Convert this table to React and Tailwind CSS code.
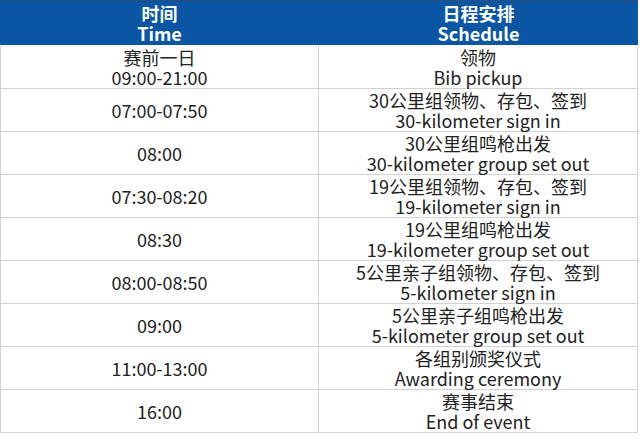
import React from "react";

const rows = [
  [["赛前一日", "09:00-21:00"], ["领物", "Bib pickup"]],
  [["07:00-07:50"], ["30公里组领物、存包、签到", "30-kilometer sign in"]],
  [["08:00"], ["30公里组鸣枪出发", "30-kilometer group set out"]],
  [["07:30-08:20"], ["19公里组领物、存包、签到", "19-kilometer sign in"]],
  [["08:30"], ["19公里组鸣枪出发", "19-kilometer group set out"]],
  [["08:00-08:50"], ["5公里亲子组领物、存包、签到", "5-kilometer sign in"]],
  [["09:00"], ["5公里亲子组鸣枪出发", "5-kilometer group set out"]],
  [["11:00-13:00"], ["各组别颁奖仪式", "Awarding ceremony"]],
  [["16:00"], ["赛事结束", "End of event"]],
];

function Cell({ lines, className = "" }) {
  return (
    <div className={"flex flex-col items-center justify-center " + className}>
      {lines.map((l, i) => (
        <div key={i} className="whitespace-nowrap">{l}</div>
      ))}
    </div>
  );
}

export default function App() {
  return (
    <div
      className="w-[640px] h-[444px] bg-white text-[#222222] text-[18px] leading-[20px]"
      style={{ fontFamily: '"Noto Sans CJK SC", "Noto Sans", sans-serif' }}
    >
      <div className="w-[638px]">
        <div className="grid grid-cols-2 h-[45px] bg-[#0a56a5] text-white font-bold border-t border-[#2d4f78]">
          <Cell lines={["时间", "Time"]} />
          <Cell lines={["日程安排", "Schedule"]} />
        </div>
        <div className="h-px" />
        {rows.map((r, i) => (
          <div key={i} className="grid grid-cols-2 h-[43px] border-b border-[#d2d2d2]">
            <Cell lines={r[0]} className="border-l border-r border-[#d2d2d2]" />
            <Cell lines={r[1]} className="border-r border-[#d2d2d2]" />
          </div>
        ))}
      </div>
    </div>
  );
}
